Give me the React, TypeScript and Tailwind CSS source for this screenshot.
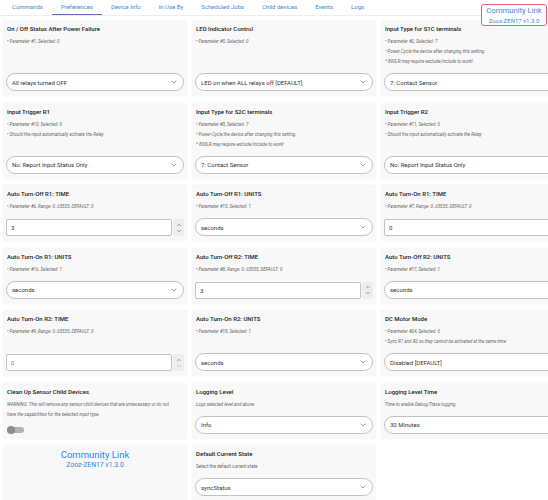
import { ChevronDown, ChevronUp } from "lucide-react";

type Field =
  | { kind: "select"; value: string }
  | { kind: "number"; value: string; accent?: boolean }
  | { kind: "toggle" };

interface Pref {
  title: string;
  notes: string[];
  plain?: boolean; // description line, not bullet notes
  field: Field;
}

const tabs = ["Commands", "Preferences", "Device Info", "In Use By", "Scheduled Jobs", "Child devices", "Events", "Logs"];

const prefs: Pref[] = [
  { title: "On / Off Status After Power Failure", notes: ["• Parameter #1, Selected: 0"], field: { kind: "select", value: "All relays turned OFF" } },
  { title: "LED Indicator Control", notes: ["• Parameter #5, Selected: 0"], field: { kind: "select", value: "LED on when ALL relays off [DEFAULT]" } },
  {
    title: "Input Type for S1C terminals",
    notes: ["• Parameter #2, Selected: 7", "• Power Cycle the device after changing this setting.", "* 800LR may require exclude/include to work!"],
    field: { kind: "select", value: "7: Contact Sensor" },
  },
  { title: "Input Trigger R1", notes: ["• Parameter #10, Selected: 0", "• Should the input automatically activate the Relay"], field: { kind: "select", value: "No: Report Input Status Only" } },
  {
    title: "Input Type for S2C terminals",
    notes: ["• Parameter #3, Selected: 7", "• Power Cycle the device after changing this setting.", "* 800LR may require exclude/include to work!"],
    field: { kind: "select", value: "7: Contact Sensor" },
  },
  { title: "Input Trigger R2", notes: ["• Parameter #11, Selected: 0", "• Should the input automatically activate the Relay"], field: { kind: "select", value: "No: Report Input Status Only" } },
  { title: "Auto Turn-Off R1: TIME", notes: ["• Parameter #6, Range: 0..65535, DEFAULT: 0"], field: { kind: "number", value: "3" } },
  { title: "Auto Turn-Off R1: UNITS", notes: ["• Parameter #15, Selected: 1"], field: { kind: "select", value: "seconds" } },
  { title: "Auto Turn-On R1: TIME", notes: ["• Parameter #7, Range: 0..65535, DEFAULT: 0"], field: { kind: "number", value: "0" } },
  { title: "Auto Turn-On R1: UNITS", notes: ["• Parameter #16, Selected: 1"], field: { kind: "select", value: "seconds" } },
  { title: "Auto Turn-Off R2: TIME", notes: ["• Parameter #8, Range: 0..65535, DEFAULT: 0"], field: { kind: "number", value: "3" } },
  { title: "Auto Turn-Off R2: UNITS", notes: ["• Parameter #17, Selected: 1"], field: { kind: "select", value: "seconds" } },
  { title: "Auto Turn-On R2: TIME", notes: ["• Parameter #9, Range: 0..65535, DEFAULT: 0"], field: { kind: "number", value: "0", accent: true } },
  { title: "Auto Turn-On R2: UNITS", notes: ["• Parameter #18, Selected: 1"], field: { kind: "select", value: "seconds" } },
  { title: "DC Motor Mode", notes: ["• Parameter #24, Selected: 0", "• Sync R1 and R2 so they cannot be activated at the same time"], field: { kind: "select", value: "Disabled [DEFAULT]" } },
  {
    title: "Clean Up Sensor Child Devices",
    notes: ["WARNING: This will remove any sensor child devices that are unnecessary or do not", "have the capabilities for the selected input type."],
    field: { kind: "toggle" },
  },
  { title: "Logging Level", notes: ["Logs selected level and above"], field: { kind: "select", value: "Info" } },
  { title: "Logging Level Time", notes: ["Time to enable Debug/Trace logging"], field: { kind: "select", value: "30 Minutes" } },
];

const defaultState: Pref = {
  title: "Default Current State",
  notes: ["Select the default current state"],
  plain: true,
  field: { kind: "select", value: "syncStatus" },
};

function FieldControl({ field }: { field: Field }) {
  if (field.kind === "toggle") {
    return (
      <div className="relative ml-[1px] mt-[1px] h-[6px] w-[17px] rounded-full bg-[#b3b3b3]">
        <div className="absolute -top-[1px] left-0 h-[8px] w-[8px] rounded-full bg-[#8c8c8c]" />
      </div>
    );
  }
  if (field.kind === "number") {
    return (
      <div className="mt-auto flex h-[17px] items-stretch gap-[1px]">
        <div className={`flex flex-1 items-center rounded-[2px] border border-[#c2c2c2] bg-white pl-[4px] text-[6px] ${field.accent ? "text-[#d2691e]" : "text-[#333]"}`}>
          {field.value}
        </div>
        <div className="flex w-[11px] flex-col items-center justify-center rounded-[2px] bg-[#ededed] text-[#666]">
          <ChevronUp size={6} strokeWidth={2.5} />
          <ChevronDown size={6} strokeWidth={2.5} className={field.accent ? "text-[#bbb]" : ""} />
        </div>
      </div>
    );
  }
  return (
    <div className="mt-auto flex h-[18px] items-center justify-between rounded-full border border-[#c2c2c2] bg-white pl-[5px] pr-[5px]">
      <span className="text-[6px] text-[#333]">{field.value}</span>
      <ChevronDown size={8} strokeWidth={2} className="text-[#666]" />
    </div>
  );
}

function PrefCard({ title, notes, plain, field }: Pref) {
  return (
    <div className="flex flex-col rounded-[3px] bg-[#f8f8f8] px-[3px] pt-[4px] pb-[5px] shadow-[0_0_1px_rgba(0,0,0,0.12)]">
      <div className="pl-[1px] text-[6px] leading-[9px] font-medium text-[#222]">{title}</div>
      <div className="mt-[4px] mb-[6px] pl-[1px]">
        {notes.map((n) => (
          <div key={n} className={`whitespace-nowrap text-[4.5px] leading-[10px] text-[#666] ${plain ? "" : "italic"}`}>
            {n}
          </div>
        ))}
      </div>
      <FieldControl field={field} />
    </div>
  );
}

export default function App() {
  return (
    <div className="relative h-[500px] w-[548px] overflow-hidden bg-white [font-family:Roboto,sans-serif]">
      {/* Tabs */}
      <div className="flex h-[16px] items-start border-b border-[#ededed] pl-[3px]">
        {tabs.map((t) => (
          <div
            key={t}
            className={`h-[15px] whitespace-nowrap px-[9px] pt-[3px] text-[6px] leading-[7px] text-[#3a8bd6] ${t === "Preferences" ? "border-b-[1.5px] border-[#5c6bc0]" : ""}`}
          >
            {t}
          </div>
        ))}
      </div>

      {/* Community badge, top right */}
      <div className="absolute left-[481px] top-[4px] flex h-[22px] w-[66px] flex-col items-center rounded-[3px] border border-[#e3607a] bg-white pt-[1px]">
        <span className="text-[7.7px] leading-[10px] text-[#3a8bd6]">Community Link</span>
        <span className="text-[6px] leading-[9px] text-[#3a8bd6]">Zooz-ZEN17 v1.3.0</span>
      </div>

      {/* Preference grid */}
      <div className="mt-[4px] grid w-max grid-cols-[184px_184px_184px] gap-x-[5px] gap-y-[6.5px] px-[3px]">
        {prefs.map((p) => (
          <PrefCard key={p.title} {...p} />
        ))}
        <div className="flex flex-col items-center rounded-[3px] bg-[#f8f8f8] pt-[4px] shadow-[0_0_1px_rgba(0,0,0,0.12)]">
          <span className="text-[9.5px] leading-[12px] text-[#1e88e5]">Community Link</span>
          <span className="text-[6.8px] leading-[8px] text-[#1e88e5]">Zooz-ZEN17 v1.3.0</span>
        </div>
        <PrefCard {...defaultState} />
      </div>
    </div>
  );
}
